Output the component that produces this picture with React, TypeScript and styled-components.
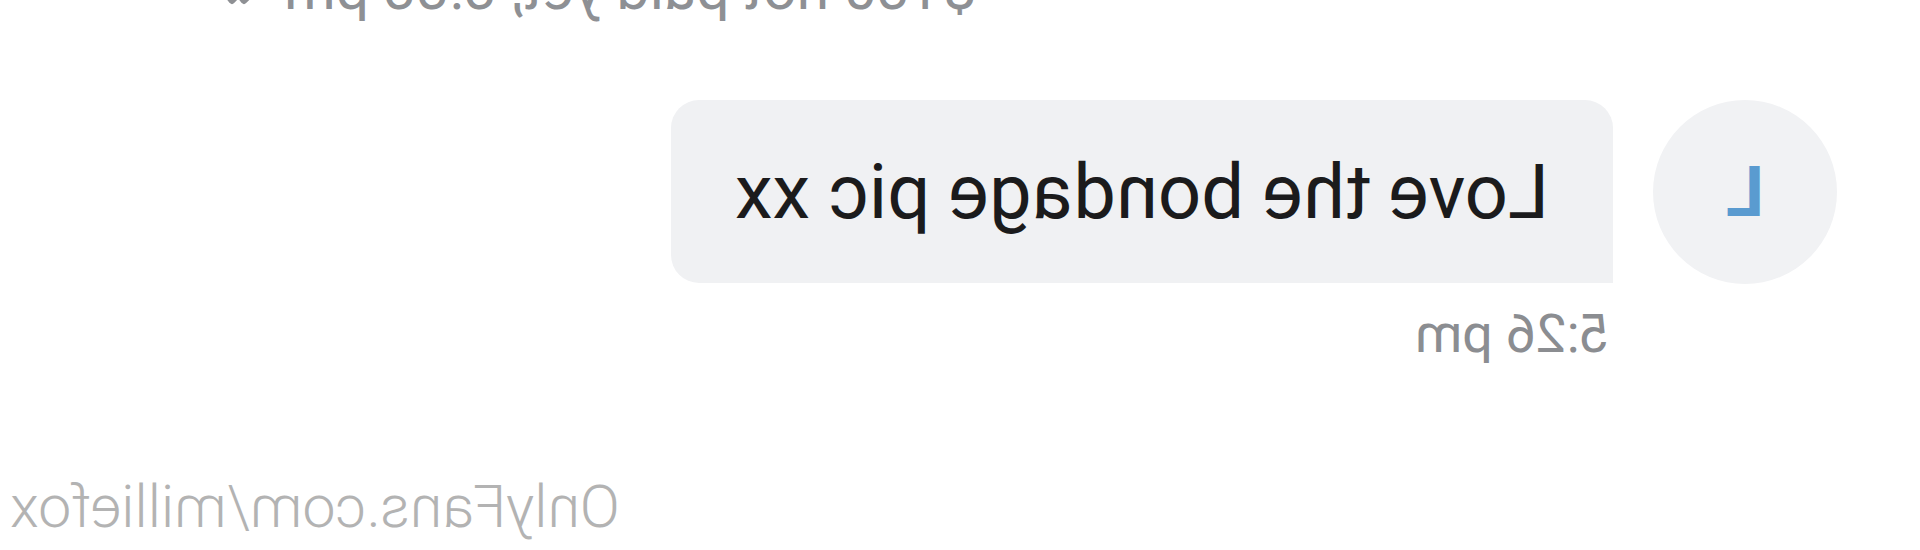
import React from "react";
import styled, { createGlobalStyle } from "styled-components";

const GlobalStyle = createGlobalStyle`
  html, body {
    margin: 0;
    padding: 0;
    background: #ffffff;
  }
  body {
    font-family: Roboto, "Liberation Sans", Arial, sans-serif;
  }
`;

// the whole screenshot is a mirror image, so lay it out normally and flip it
const Page = styled.div`
  width: 1920px;
  height: 550px;
  overflow: hidden;
  display: flex;
  flex-direction: column;
  transform: scaleX(-1);
  background: #ffffff;
`;

const MetaLine = styled.div`
  display: flex;
  justify-content: flex-end;
  align-items: center;
  gap: 26px;
  padding-right: 200px;
  margin-top: -41px;
  font-size: 59px;
  line-height: 60px;
  color: #8e9094;
  white-space: nowrap;
`;

const MessageRow = styled.div`
  display: flex;
  align-items: flex-start;
  gap: 40px;
  padding-left: 83px;
  margin-top: 81px;
`;

const Avatar = styled.div`
  flex: 0 0 auto;
  width: 184px;
  height: 184px;
  border-radius: 50%;
  background: #f1f2f4;
  display: flex;
  align-items: center;
  justify-content: center;
  color: #5a9bd0;
  font-size: 70px;
  font-weight: 700;
  line-height: 1;
`;

const MessageColumn = styled.div`
  display: flex;
  flex-direction: column;
  align-items: flex-start;
`;

const Bubble = styled.div`
  height: 183px;
  box-sizing: border-box;
  display: flex;
  align-items: center;
  padding: 0 64px;
  background: #f0f1f3;
  border-radius: 28px 28px 28px 0;
  color: #1b1b1c;
  font-size: 76px;
  white-space: nowrap;
`;

const Time = styled.div`
  margin-top: 19px;
  padding-left: 3px;
  font-size: 54px;
  line-height: 1.2;
  color: #8b8d91;
`;

const Watermark = styled.div`
  margin-top: auto;
  padding: 0 10px 7px 0;
  text-align: right;
  font-size: 59px;
  line-height: 1.2;
  font-weight: 300;
  color: #b3b3b3;
`;

const DoubleCheck = () => (
  <svg width="58" height="40" viewBox="0 0 58 40" fill="none">
    <path d="M4 22 L14 32 L32 10" stroke="#8e9094" strokeWidth="6" strokeLinecap="round" strokeLinejoin="round" />
    <path d="M24 30 L26 32 L44 10" stroke="#8e9094" strokeWidth="6" strokeLinecap="round" strokeLinejoin="round" />
  </svg>
);

const App = () => {
  return (
    <>
      <GlobalStyle />
      <Page>
        <MetaLine>
          <span>$150 not paid yet, 5:55 pm</span>
          <DoubleCheck />
        </MetaLine>
        <MessageRow>
          <Avatar>L</Avatar>
          <MessageColumn>
            <Bubble>Love the bondage pic xx</Bubble>
            <Time>5:26 pm</Time>
          </MessageColumn>
        </MessageRow>
        <Watermark>OnlyFans.com/milliefox</Watermark>
      </Page>
    </>
  );
};

export default App;
